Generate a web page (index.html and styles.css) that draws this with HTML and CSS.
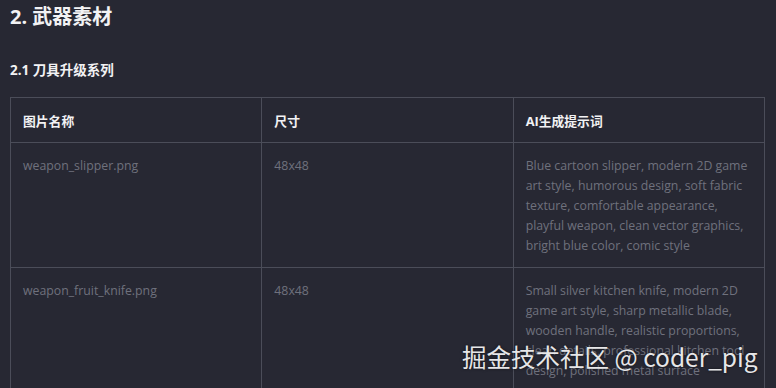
FILE: index.html
```html
<!DOCTYPE html>
<html lang="zh">
<head>
<meta charset="utf-8">
<link rel="stylesheet" href="styles.css">
</head>
<body>
<main class="doc">
  <h2 class="h2">2. 武器素材</h2>
  <h3 class="h3">2.1 刀具升级系列</h3>
  <table class="tbl">
    <thead>
      <tr><th>图片名称</th><th>尺寸</th><th>AI生成提示词</th></tr>
    </thead>
    <tbody>
      <tr>
        <td>weapon_slipper.png</td>
        <td>48x48</td>
        <td>Blue cartoon slipper, modern 2D game art style, humorous design, soft fabric texture, comfortable appearance, playful weapon, clean vector graphics, bright blue color, comic style</td>
      </tr>
      <tr>
        <td>weapon_fruit_knife.png</td>
        <td>48x48</td>
        <td>Small silver kitchen knife, modern 2D game art style, sharp metallic blade, wooden handle, realistic proportions, clean details, professional kitchen tool design, polished metal surface</td>
      </tr>
    </tbody>
  </table>
</main>
<div class="watermark">掘金技术社区 @ coder_pig</div>
</body>
</html>
```
FILE: styles.css
```css
html, body {
  margin: 0;
  padding: 0;
  background: #272833;
  overflow: hidden;
}
body {
  width: 776px;
  height: 388px;
  font-family: "Open Sans", "Noto Sans CJK SC", sans-serif;
  color: #6f717d;
}
.doc {
  padding: 0 11px 0 10px;
}
.h2 {
  margin: 0;
  padding-top: 3px;
  font-size: 20px;
  line-height: 28px;
  font-weight: 700;
  color: #f2f2f4;
}
.h3 {
  margin: 0;
  padding-top: 25px;
  font-size: 13.5px;
  line-height: 28px;
  font-weight: 700;
  color: #f2f2f4;
}
.tbl {
  margin-top: 13px;
  width: 755px;
  border-collapse: collapse;
  table-layout: fixed;
}
.tbl th, .tbl td {
  border: 1px solid #4b4d59;
  padding: 13px 12px 11px;
  text-align: left;
  vertical-align: top;
  font-size: 12.3px;
  line-height: 20px;
}
.tbl th {
  color: #f2f2f4;
  font-weight: 700;
  font-size: 12.8px;
}
.tbl td {
  color: #6f717d;
}
.watermark {
  position: absolute;
  left: 462px;
  top: 340px;
  font-family: "Noto Sans CJK SC", "Noto Sans", sans-serif;
  font-size: 24.5px;
  line-height: 34px;
  color: #e6e6e8;
  text-shadow: 0 0 3px rgba(0,0,0,0.6);
  white-space: nowrap;
}
```
